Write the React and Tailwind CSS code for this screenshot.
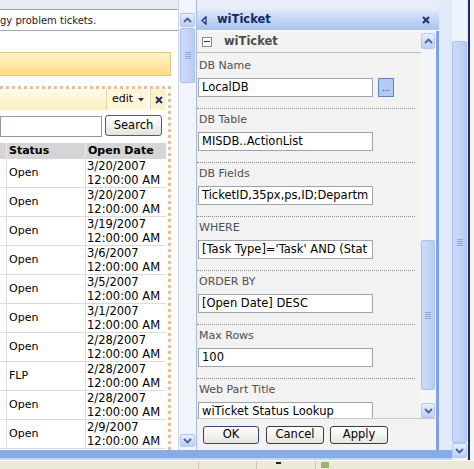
import React from 'react'

const rows = [
  ['Open', '3/20/2007'],
  ['Open', '3/20/2007'],
  ['Open', '3/19/2007'],
  ['Open', '3/6/2007'],
  ['Open', '3/5/2007'],
  ['Open', '3/1/2007'],
  ['Open', '2/28/2007'],
  ['FLP', '2/28/2007'],
  ['Open', '2/28/2007'],
  ['Open', '2/9/2007'],
]

const fields = [
  { label: 'DB Name', value: 'LocalDB', browse: true },
  { label: 'DB Table', value: 'MISDB..ActionList' },
  { label: 'DB Fields', value: 'TicketID,35px,ps,ID;Departm' },
  { label: 'WHERE', value: "[Task Type]='Task' AND (Stat" },
  { label: 'ORDER BY', value: '[Open Date] DESC' },
  { label: 'Max Rows', value: '100' },
  { label: 'Web Part Title', value: 'wiTicket Status Lookup' },
]

const Arrow = ({ up, className }) => (
  <div className={`flex items-center justify-center rounded-[2px] border border-[#b4c8ef] bg-linear-to-b from-[#e8effc] to-[#bccef4] ${className}`}>
    <svg width="9" height="6" viewBox="0 0 9 6">
      <path d={up ? 'M1 5 L4.5 1.5 L8 5' : 'M1 1 L4.5 4.5 L8 1'} fill="none" stroke="#4b5f8f" strokeWidth="1.8" />
    </svg>
  </div>
)

const Thumb = ({ className }) => (
  <div className={`flex items-center justify-center rounded-[2px] border border-[#abc1ee] bg-linear-to-r from-[#cddbf8] to-[#b9ccf3] ${className}`}>
    <div className="flex flex-col gap-[1px]">
      <div className="w-[6px] h-[1px] bg-[#8ea6d8]" />
      <div className="w-[6px] h-[1px] bg-[#8ea6d8]" />
      <div className="w-[6px] h-[1px] bg-[#8ea6d8]" />
      <div className="w-[6px] h-[1px] bg-[#8ea6d8]" />
    </div>
  </div>
)

const XIcon = ({ color = '#1d2f6b' }) => (
  <svg width="8" height="8" viewBox="0 0 8 8">
    <path d="M1 1 L7 7 M7 1 L1 7" stroke={color} strokeWidth="2" />
  </svg>
)

const PageArea = () => (
  <div className="w-[179px] flex flex-col border-r border-[#cfd6e2] bg-white">
    <div className="h-[9px] bg-[#e6ebf4]" />
    <div className="h-[22px] flex items-center border-y border-[#9aa6b8] text-[10px] text-[#222] whitespace-nowrap overflow-hidden">
      gy problem tickets.
    </div>
    <div className="h-[21px]" />
    {/* Yellow bar */}
    <div className="w-[171px] h-[24px] border-y border-r border-[#e4c785] bg-linear-to-b from-[#fff4cc] to-[#ffdb84]" />
    <div className="h-[10px]" />
    {/* Web part */}
    <div className="w-[171px] flex-1 border-t-[3px] border-r-[3px] border-dotted border-[#e8bf96] flex flex-col">
      <div className="h-[21px] flex w-[166px]">
        <div className="flex-1 bg-linear-to-b from-[#fffbeb] to-[#ffeec0]" />
        <div className="w-[42px] flex items-center pl-[5px] gap-[5px] border-l border-[#e6d7a8] bg-[#fff6da] text-[11px]">
          edit
          <svg width="6" height="4" viewBox="0 0 6 4"><path d="M0 0 H6 L3 3.5 Z" fill="#333" /></svg>
        </div>
        <div className="w-[2px] bg-white" />
        <div className="w-[16px] flex items-center justify-center border-l border-[#e6d7a8] bg-[#fff2c8]">
          <XIcon />
        </div>
      </div>
      <div className="h-[5px]" />
      <div className="h-[22px] flex items-start">
        <div className="w-[102px] h-[21px] mt-[1px] border border-[#8f9aa8] bg-white" />
        <div className="ml-[3px] w-[57px] h-[21px] rounded-[3px] border border-[#5a5a5a] bg-linear-to-b from-white to-[#e4e4dc] flex items-center justify-center text-[11.5px]">
          Search
        </div>
      </div>
      <div className="h-[6px]" />
      {/* Table */}
      <div className="w-[166px] flex flex-col">
        <div className="h-[16px] flex bg-[#d5d5d5] font-bold text-[11px] leading-[16px]">
          <div className="w-[7px] border-r border-[#ececec]" />
          <div className="w-[79px] pl-[2px] border-r border-[#ececec]">Status</div>
          <div className="flex-1 pl-[2px]">Open Date</div>
        </div>
        {rows.map(([status, date], i) => (
          <div key={i} className="h-[29px] flex border-b border-[#dcdcdc]">
            <div className="w-[7px] border-r border-[#dcdcdc]" />
            <div className="w-[79px] pl-[2px] border-r border-[#dcdcdc] flex items-center text-[11px]">{status}</div>
            <div className="flex-1 pl-[1px] text-[11.5px] leading-[13.5px] pt-[1px] whitespace-nowrap">
              <div>{date}</div>
              <div>12:00:00 AM</div>
            </div>
          </div>
        ))}
      </div>
    </div>
  </div>
)

const PageScroll = () => (
  <div className="w-[17px] flex flex-col px-[1px] bg-[#f1f4fa]">
    <div className="h-[13px]" />
    <Arrow up className="h-[14px]" />
    <Thumb className="mt-[1px] h-[55px]" />
    <div className="flex-1" />
    <Arrow className="h-[13px]" />
    <div className="h-[3px]" />
  </div>
)

const Section = ({ label, value, browse, first }) => (
  <div className={`mr-[6px] border-b border-dotted border-[#8c8c8c] pb-[11px] ${first ? 'pt-[5px]' : 'pt-[3px]'}`}>
    <div className="pl-[2px] leading-[16px] text-[11px] text-[#4f4f4f]">{label}</div>
    <div className="mt-[4px] flex items-center pl-[1px]">
      <div className="w-[175px] h-[19px] border border-[#9ca3ad] bg-white pl-[3px] text-[11.5px] leading-[17px] whitespace-nowrap overflow-hidden">
        {value}
      </div>
      {browse && (
        <div className="ml-[5px] w-[16px] h-[19px] border border-[#5d7fc4] bg-[#b3cbf3] flex items-end justify-center pb-[3px] text-[8px] leading-none text-[#1d2f6b]">
          ...
        </div>
      )}
    </div>
  </div>
)

const Button = ({ children, primary, className }) => (
  <div className={`h-[18px] rounded-[3px] flex items-center justify-center text-[11.5px] bg-linear-to-b from-white to-[#e6e6de] ${primary ? 'border-[1.5px] border-[#2c447f]' : 'border border-[#3c3c3c]'} ${className}`}>
    {children}
  </div>
)

const ToolPane = () => (
  <div className="w-[243px] flex flex-col border-l border-[#a7b9dc]">
    <div className="h-[10px] bg-[#e8edf8]" />
    <div className="h-[21px] flex items-center bg-linear-to-b from-[#dde8fb] via-[#c3d5f5] to-[#a8c2ee] border-b border-white">
      <svg className="ml-[4px]" width="6" height="9" viewBox="0 0 6 9">
        <path d="M5 0.8 L1 4.5 L5 8.2 Z" fill="none" stroke="#1d2f6b" strokeWidth="1.2" />
      </svg>
      <span className="ml-[10px] font-bold text-[11.5px] text-[#0f2a66]">wiTicket</span>
      <div className="flex-1" />
      <div className="mr-[9px]"><XIcon /></div>
    </div>
    <div className="flex-1 flex flex-col bg-[#f2f2f2] border-r-[3px] border-[#7ea3e4]">
      <div className="h-[387px] flex overflow-hidden">
        <div className="w-[224px] flex flex-col">
          <div className="h-[22px] shrink-0 flex items-center border-b border-[#bdbdbd]">
            <div className="ml-[5px] w-[10px] h-[10px] border border-[#8a8a8a] bg-white flex items-center justify-center">
              <div className="w-[6px] h-[1px] bg-[#333]" />
            </div>
            <span className="ml-[12px] font-bold text-[11.5px] text-[#4d4d4d]">wiTicket</span>
          </div>
          {fields.map((f, i) => (
            <Section key={f.label} {...f} first={i === 0} />
          ))}
        </div>
        <div className="w-[15px] flex flex-col pr-[1px] bg-[#f4f5f9]">
          <div className="h-[2px]" />
          <Arrow up className="h-[16px]" />
          <div className="h-[191px]" />
          <Thumb className="h-[150px]" />
          <div className="h-[13px]" />
          <Arrow className="h-[15px]" />
        </div>
      </div>
      <div className="flex-1 border-t border-[#c9c9c9] flex items-start pt-[7px] pl-[6px]">
        <Button primary className="w-[56px]">OK</Button>
        <Button className="ml-[7px] w-[58px]">Cancel</Button>
        <Button className="ml-[6px] w-[58px]">Apply</Button>
      </div>
    </div>
  </div>
)

const OuterScroll = () => (
  <div className="w-[22px] flex">
    <div className="w-[15px] flex flex-col bg-[#eef2fb]">
      <div className="h-[41px]" />
      <Thumb className="h-[402px]" />
      <Arrow className="h-[15px]" />
      <div className="h-[2px]" />
    </div>
    <div className="w-[1px] bg-[#dfe6f3]" />
    <div className="w-[2px] bg-[#1c2f63]" />
    <div className="flex-1 bg-[#f4f4f4]" />
  </div>
)

export default function App() {
  return (
    <div className="w-[474px] h-[469px] overflow-hidden bg-white flex flex-col font-['DejaVu_Sans',Verdana,sans-serif] text-black">
      <div className="flex h-[460px]">
        <div className="w-[452px] flex flex-col">
          <div className="flex h-[450px]">
            <PageArea />
            <PageScroll />
            <ToolPane />
            <div className="w-[13px] bg-[#e2eaf9]" />
          </div>
          <div className="h-[10px] bg-[#86ace8] border-b-2 border-[#c2d5f4]" />
        </div>
        <OuterScroll />
      </div>
      <div className="flex-1 flex bg-[#ece9d8] border-t border-[#fbfbf7]">
        <div className="w-[199px] border-r border-[#c9c5b2]" />
        <div className="w-[58px] border-r border-[#c9c5b2]" />
        <div className="w-[19px]" />
        <div className="w-[5px] h-[5px] mt-[1px] border-t-2 border-[#222]" />
        <div className="w-[35px] border-r border-[#c9c5b2]" />
        <div className="ml-[5px] w-[8px] h-[6px] mt-[1px] rounded-[1px] bg-[#9bb36a]" />
      </div>
    </div>
  )
}
